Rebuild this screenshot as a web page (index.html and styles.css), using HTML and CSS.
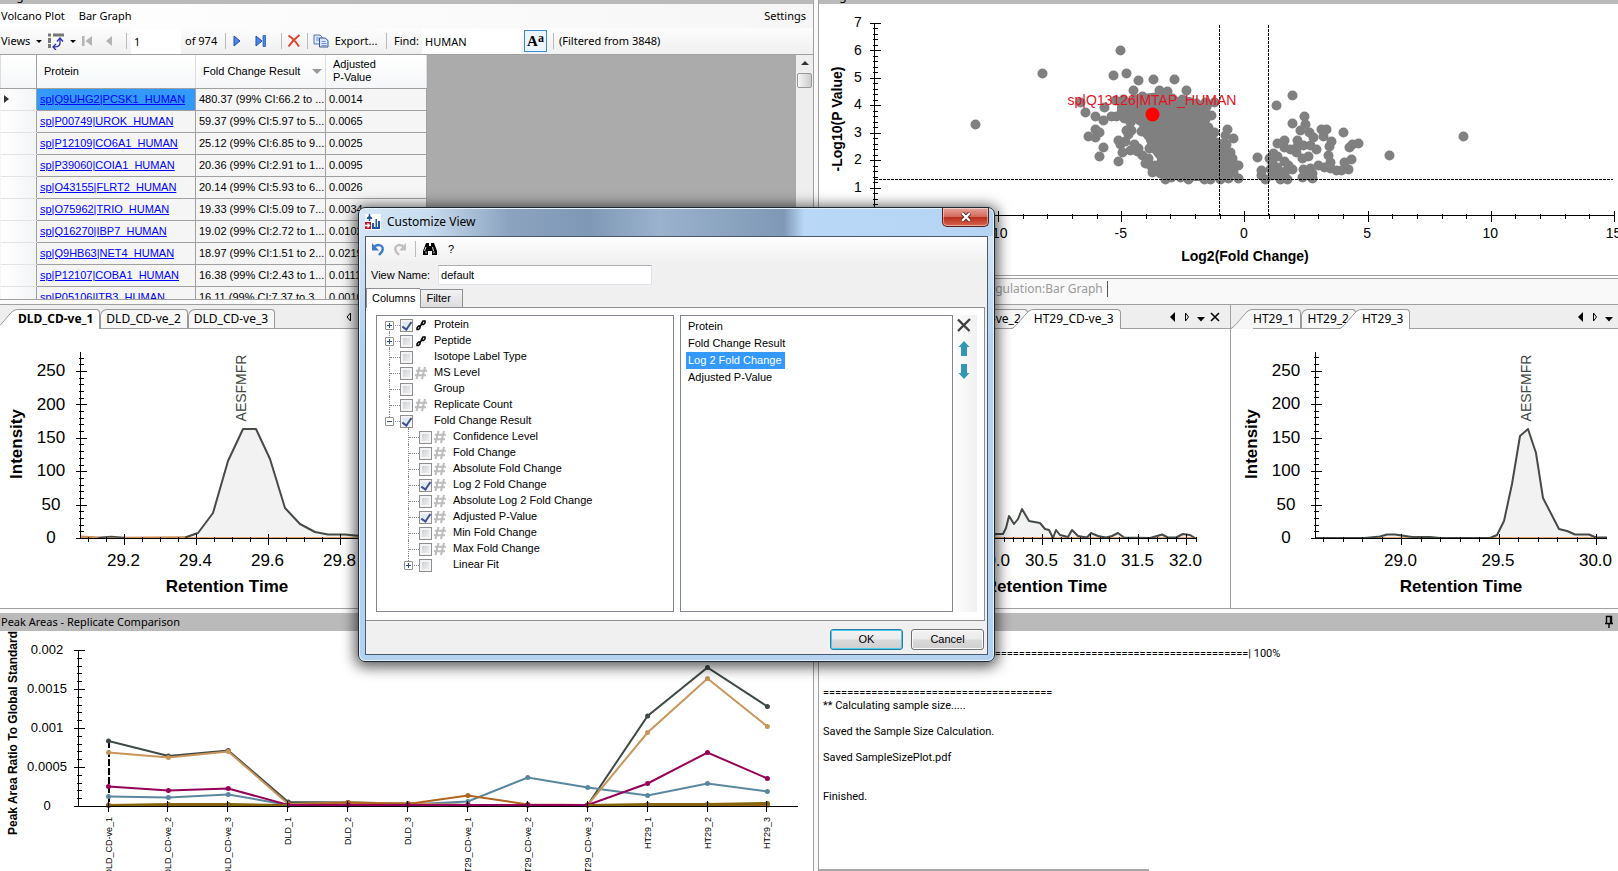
FILE: index.html
```html
<!DOCTYPE html>
<html lang="en">
<head>
<meta charset="utf-8">
<title>Customize View</title>
<link rel="stylesheet" href="styles.css">
</head>
<body>
<svg class="symbols" aria-hidden="true">
  <symbol id="i-hash" viewBox="0 0 14 14"><path d="M5.500 1 2.500 13M11 1 8 13M2 4.700H13M1 9.300H12" fill="none" stroke="#bcbcbc" stroke-width="2"/></symbol>
  <symbol id="i-link" viewBox="0 0 14 14"><path d="M3 10 4.500 8h1.500v2l-1.500 1.500H3zM7.500 5.500l1.500-2.500h2v2L9.500 6.500h-2z" fill="none" stroke="#000" stroke-width="1.500"/><path d="M5.500 8.500l3-3" stroke="#000" stroke-width="1.500"/></symbol>
  <symbol id="i-left" viewBox="0 0 10 12"><path d="M7 1v10L2 6z" fill="#000"/></symbol>
  <symbol id="i-left-o" viewBox="0 0 10 12"><path d="M6.500 2v8L3 6z" fill="none" stroke="#000"/></symbol>
  <symbol id="i-right-o" viewBox="0 0 10 12"><path d="M3.500 2v8L6.500 6z" fill="none" stroke="#000"/></symbol>
  <symbol id="i-down" viewBox="0 0 10 12"><path d="M1 6h8L5 10.500z" fill="#000"/></symbol>
  <symbol id="i-x" viewBox="0 0 10 12"><path d="M1 2l8 8M9 2l-8 8" stroke="#000" stroke-width="1.600"/></symbol>
  <symbol id="i-slant" viewBox="0 0 22 20"><path class="slant-fill" d="M0 20C5 17 12 6 17 2Q19 .5 22 .5V20z"/><path d="M0 19.500C5 17 12 6 17 2Q19 .5 22 .5" fill="none" stroke="#999"/></symbol>
</svg>

<main class="app">
  <section class="top-row">
    <div class="grid-panel">
      <div class="panel-sliver"><span>Regulation:Grid</span></div>
      <nav class="menubar">
        <button type="button">Volcano Plot</button>
        <button type="button">Bar Graph</button>
        <button type="button" class="push">Settings</button>
      </nav>
      <div class="toolbar">
        <button type="button" class="views">Views <i class="caret"></i></button>
        <button type="button" class="layout" aria-label="Pivot">
          <svg width="18" height="18" viewBox="0 0 18 18"><path d="M1 3h3M6 3h11" stroke="#777" stroke-width="3"/><path d="M2.500 6v10" stroke="#777" stroke-width="3" stroke-dasharray="5 1"/><path d="M13 7v4q0 4-6 4" fill="none" stroke="#2a2ab8" stroke-width="1.300"/><path d="M10 9.500 13 6l3 3.500M9 12 6 15l3 3" fill="none" stroke="#2a2ab8" stroke-width="1.300"/></svg>
          <i class="caret"></i>
        </button>
        <button type="button" aria-label="First"><svg width="12" height="12" viewBox="0 0 12 12"><path d="M1 1h2.500v10H1zM11 1v10L4.500 6z" fill="#b4b4b4"/></svg></button>
        <button type="button" aria-label="Previous"><svg width="12" height="12" viewBox="0 0 12 12"><path d="M9 1v10L3 6z" fill="#b4b4b4"/></svg></button>
        <i class="sep"></i>
        <input type="text" value="1" aria-label="Row">
        <span>of 974</span>
        <i class="sep"></i>
        <button type="button" aria-label="Next"><svg width="12" height="12" viewBox="0 0 12 12"><path d="M3 1v10l6-5z" fill="#4d87e6" stroke="#1d4fae"/></svg></button>
        <button type="button" aria-label="Last"><svg width="12" height="12" viewBox="0 0 12 12"><path d="M1 1v10l6-5z" fill="#4d87e6" stroke="#1d4fae"/><path d="M8 .5h2.500v11H8z" fill="#4d87e6" stroke="#1d4fae" stroke-width=".7"/></svg></button>
        <i class="sep"></i>
        <button type="button" aria-label="Delete"><svg width="14" height="14" viewBox="0 0 14 14"><path d="M1.500 1.500Q7 5 12 12.500M12.500 1Q6 6 1.500 12.500" fill="none" stroke="#e2402c" stroke-width="2"/></svg></button>
        <i class="sep"></i>
        <button type="button" aria-label="Copy"><svg width="16" height="14" viewBox="0 0 16 14"><path d="M1 1h6l2 2v7H1z" fill="#dfe9fa" stroke="#5577b5"/><path d="M6.500 4h5.500l3 2.500V13H6.500z" fill="#dfe9fa" stroke="#34579c"/><path d="M3 4h3M3 6h3M8.500 7.500h4M8.500 9.500h5M8.500 11.500h5" stroke="#6f93d4"/></svg></button>
        <button type="button">Export...</button>
        <i class="sep"></i>
        <label for="find">Find:</label>
        <input type="text" id="find" value="HUMAN">
        <button type="button" class="case-btn" aria-label="Match case"><b>A</b><b class="small-a">a</b></button>
        <i class="sep"></i>
        <span class="filtered">(Filtered from 3848)</span>
      </div>
      <div class="datagrid">
        <table>
          <colgroup><col class="c-head"><col class="c-protein"><col class="c-fold"><col class="c-p"></colgroup>
          <thead><tr><th></th><th>Protein</th><th><span class="sorted">Fold Change Result<i></i></span></th><th class="two">Adjusted<br>P-Value</th></tr></thead>
          <tbody>
            <tr class="current"><td><i class="row-mark"></i></td><td><a href="#">sp|Q9UHG2|PCSK1_HUMAN</a></td><td>480.37 (99% CI:66.2 to ...</td><td>0.0014</td></tr>
            <tr><td></td><td><a href="#">sp|P00749|UROK_HUMAN</a></td><td>59.37 (99% CI:5.97 to 5...</td><td>0.0065</td></tr>
            <tr><td></td><td><a href="#">sp|P12109|CO6A1_HUMAN</a></td><td>25.12 (99% CI:6.85 to 9...</td><td>0.0025</td></tr>
            <tr><td></td><td><a href="#">sp|P39060|COIA1_HUMAN</a></td><td>20.36 (99% CI:2.91 to 1...</td><td>0.0095</td></tr>
            <tr><td></td><td><a href="#">sp|O43155|FLRT2_HUMAN</a></td><td>20.14 (99% CI:5.93 to 6...</td><td>0.0026</td></tr>
            <tr><td></td><td><a href="#">sp|O75962|TRIO_HUMAN</a></td><td>19.33 (99% CI:5.09 to 7...</td><td>0.0034</td></tr>
            <tr><td></td><td><a href="#">sp|Q16270|IBP7_HUMAN</a></td><td>19.02 (99% CI:2.72 to 1...</td><td>0.0102</td></tr>
            <tr><td></td><td><a href="#">sp|Q9HB63|NET4_HUMAN</a></td><td>18.97 (99% CI:1.51 to 2...</td><td>0.0219</td></tr>
            <tr><td></td><td><a href="#">sp|P12107|COBA1_HUMAN</a></td><td>16.38 (99% CI:2.43 to 1...</td><td>0.0111</td></tr>
            <tr><td></td><td><a href="#">sp|P05106|ITB3_HUMAN</a></td><td>16.11 (99% CI:7.37 to 3...</td><td>0.0010</td></tr>
          </tbody>
        </table>
        <div class="scrollbar"><i class="up"></i><i class="thumb"></i></div>
      </div>
    </div>
    <div class="volcano-panel">
      <div class="panel-sliver"><span>Regulation:Volcano Plot</span></div>
      <svg id="volcano" class="chart" viewBox="819 4 799 271"></svg>
      <div class="doc-tabs"><button type="button" class="hidden-doc" aria-label="Volcano Plot"></button><button type="button">Regulation:Bar Graph</button></div>
    </div>
  </section>

  <section class="chrom-row">
    <div class="pane">
      <div class="tabstrip">
        <button type="button" class="tab slanted active bold first"><svg class="slant"><use href="#i-slant"/></svg><span>DLD_CD-ve_1</span></button>
        <button type="button" class="tab"><span>DLD_CD-ve_2</span></button>
        <button type="button" class="tab"><span>DLD_CD-ve_3</span></button>
        <div class="tab-tools"><svg><use href="#i-left-o"/></svg><svg><use href="#i-right-o"/></svg><svg><use href="#i-down"/></svg><svg><use href="#i-x"/></svg></div>
      </div>
      <svg id="chrom1" class="chart" viewBox="0 329 406 279"></svg>
    </div>
    <div class="pane"><div class="tabstrip"></div></div>
    <div class="pane">
      <div class="tabstrip indent">
        <button type="button" class="tab slanted"><svg class="slant"><use href="#i-slant"/></svg><span>HT29_CD-ve_1</span></button>
        <button type="button" class="tab"><span>HT29_CD-ve_2</span></button>
        <button type="button" class="tab slanted active over"><svg class="slant"><use href="#i-slant"/></svg><span>HT29_CD-ve_3</span></button>
        <div class="tab-tools"><svg><use href="#i-left"/></svg><svg><use href="#i-right-o"/></svg><svg><use href="#i-down"/></svg><svg><use href="#i-x"/></svg></div>
      </div>
      <svg id="chrom3" class="chart" viewBox="818 329 412 279"></svg>
    </div>
    <div class="pane last">
      <div class="tabstrip">
        <button type="button" class="tab slanted"><svg class="slant"><use href="#i-slant"/></svg><span>HT29_1</span></button>
        <button type="button" class="tab"><span>HT29_2</span></button>
        <button type="button" class="tab slanted active over"><svg class="slant"><use href="#i-slant"/></svg><span>HT29_3</span></button>
        <div class="tab-tools edge"><svg><use href="#i-left"/></svg><svg><use href="#i-right-o"/></svg><svg><use href="#i-down"/></svg></div>
      </div>
      <svg id="chrom4" class="chart" viewBox="1231 329 387 279"></svg>
    </div>
  </section>

  <section class="bottom-row">
    <div class="areas-panel">
      <h2 class="panel-title">Peak Areas - Replicate Comparison</h2>
      <svg id="areas" class="chart" viewBox="0 631 813 240"></svg>
    </div>
    <div class="log-panel">
      <h2 class="panel-title"><svg class="pin" viewBox="0 0 10 14"><path d="M2.500 8V1.500h5V8M1 8.500h8M5 9v4M6.500 2v6" fill="none" stroke="#000" stroke-width="1.400"/></svg></h2>
      <pre class="log">|======================================================================| 100%


======================================
** Calculating sample size.....

Saved the Sample Size Calculation.

Saved SampleSizePlot.pdf


Finished.</pre>
      <div class="hscroll"></div>
    </div>
  </section>
</main>

<div class="dialog" role="dialog" aria-labelledby="dlg-title">
  <header class="titlebar">
    <svg class="app-icon" width="16" height="16" viewBox="0 0 16 16"><path fill="#fff" d="M0 0h16v16H0z"/><path d="M4.500 0v7M2 4h5" stroke="#2457a0" stroke-width="1.500"/><path d="M4.500 1 7.500 5h-6z" fill="#2457a0"/><path d="M0 8h6v7H0z" fill="#c2182c"/><path d="M0 11.500h4M2.500 9.500l2 2-2 2" fill="none" stroke="#fff" stroke-width="1.300"/><path d="M7 15V9h2v4h1.500V5H12v8h1V7h2v8z" fill="#1c56a8"/></svg>
    <h1 id="dlg-title">Customize View</h1>
    <button type="button" class="close" aria-label="Close"><svg width="14" height="10" viewBox="0 0 16 12"><path d="M3.500 1.500l9 9M12.500 1.500l-9 9" stroke="#5b2a2a" stroke-width="5"/><path d="M3.500 1.500l9 9M12.500 1.500l-9 9" stroke="#fff" stroke-width="2.800"/></svg></button>
  </header>
  <form class="client" onsubmit="return false">
    <div class="dlg-tools">
      <button type="button" aria-label="Undo"><svg width="14" height="14" viewBox="0 0 14 14"><path d="M2.500 5.500Q6 2 9.500 3.500T11 9.500L8 13" fill="none" stroke="#3f78cf" stroke-width="2.400"/><path d="M1 1v7.500h7z" fill="#3f78cf"/></svg></button>
      <button type="button" aria-label="Redo"><svg width="14" height="14" viewBox="0 0 14 14"><path d="M11.500 5.500Q8 2 4.500 3.500T3 9.500L6 13" fill="none" stroke="#c0c0c0" stroke-width="2.400"/><path d="M13 1v7.500H6z" fill="#c0c0c0"/></svg></button>
      <i class="sep"></i>
      <button type="button" aria-label="Find"><svg width="16" height="14" viewBox="0 0 16 14"><path d="M4 1h3v3h2V1h3l3 8v4h-5V9H6v4H1V9z" fill="#000"/><path d="M4 5l-1.500 4M10.500 5l1 4M4 9.500v2M12 9.500v2" stroke="#fff" stroke-width=".9"/></svg></button>
      <button type="button" aria-label="Help">?</button>
    </div>
    <div class="name-row"><label for="view-name">View Name:</label><input type="text" id="view-name" value="default"></div>
    <div class="dlg-tabs"><button type="button" class="on">Columns</button><button type="button">Filter</button></div>
    <div class="tab-page">
      <ul class="tree">
        <li class="node first"><span class="twist"><button type="button" class="box plus" aria-label="Expand"></button></span><input type="checkbox" id="t1" checked><svg class="kind"><use href="#i-link"/></svg><label for="t1">Protein</label></li>
        <li class="node"><span class="twist"><button type="button" class="box plus" aria-label="Expand"></button></span><input type="checkbox" id="t2"><svg class="kind"><use href="#i-link"/></svg><label for="t2">Peptide</label></li>
        <li class="node"><span class="twist"></span><input type="checkbox" id="t3"><i class="kind"></i><label for="t3">Isotope Label Type</label></li>
        <li class="node"><span class="twist"></span><input type="checkbox" id="t4"><svg class="kind"><use href="#i-hash"/></svg><label for="t4">MS Level</label></li>
        <li class="node"><span class="twist"></span><input type="checkbox" id="t5"><i class="kind"></i><label for="t5">Group</label></li>
        <li class="node"><span class="twist"></span><input type="checkbox" id="t6"><svg class="kind"><use href="#i-hash"/></svg><label for="t6">Replicate Count</label></li>
        <li class="node end"><span class="twist"><button type="button" class="box" aria-label="Collapse"></button></span><input type="checkbox" id="t7" checked><i class="kind"></i><label for="t7">Fold Change Result</label></li>
        <li class="node child"><span class="twist"></span><input type="checkbox" id="t8"><svg class="kind"><use href="#i-hash"/></svg><label for="t8">Confidence Level</label></li>
        <li class="node child"><span class="twist"></span><input type="checkbox" id="t9"><svg class="kind"><use href="#i-hash"/></svg><label for="t9">Fold Change</label></li>
        <li class="node child"><span class="twist"></span><input type="checkbox" id="t10"><svg class="kind"><use href="#i-hash"/></svg><label for="t10">Absolute Fold Change</label></li>
        <li class="node child"><span class="twist"></span><input type="checkbox" id="t11" checked><svg class="kind"><use href="#i-hash"/></svg><label for="t11">Log 2 Fold Change</label></li>
        <li class="node child"><span class="twist"></span><input type="checkbox" id="t12"><svg class="kind"><use href="#i-hash"/></svg><label for="t12">Absolute Log 2 Fold Change</label></li>
        <li class="node child"><span class="twist"></span><input type="checkbox" id="t13" checked><svg class="kind"><use href="#i-hash"/></svg><label for="t13">Adjusted P-Value</label></li>
        <li class="node child"><span class="twist"></span><input type="checkbox" id="t14"><svg class="kind"><use href="#i-hash"/></svg><label for="t14">Min Fold Change</label></li>
        <li class="node child"><span class="twist"></span><input type="checkbox" id="t15"><svg class="kind"><use href="#i-hash"/></svg><label for="t15">Max Fold Change</label></li>
        <li class="node child end"><span class="twist"><button type="button" class="box plus" aria-label="Expand"></button></span><input type="checkbox" id="t16"><i class="kind"></i><label for="t16">Linear Fit</label></li>
      </ul>
      <ul class="chosen">
        <li><span>Protein</span></li>
        <li><span>Fold Change Result</span></li>
        <li><span class="selected">Log 2 Fold Change</span></li>
        <li><span>Adjusted P-Value</span></li>
      </ul>
      <div class="side-tools">
        <button type="button" aria-label="Remove"><svg width="16" height="16" viewBox="0 0 16 16"><path d="M2 2.500 13.500 14M14 2 2 14" stroke="#404040" stroke-width="2.400"/></svg></button>
        <button type="button" aria-label="Move up"><svg width="12" height="15" viewBox="0 0 12 15"><path d="M6 0l5.500 6H9v9H3V6H.5z" fill="#3396b5"/></svg></button>
        <button type="button" aria-label="Move down"><svg width="12" height="15" viewBox="0 0 12 15"><path d="M6 15l5.500-6H9V0H3v9H.5z" fill="#3396b5"/></svg></button>
      </div>
    </div>
    <div class="actions"><button type="submit" class="ok">OK</button><button type="button">Cancel</button></div>
  </form>
</div>
<script src="charts.js"></script>
</body>
</html>
```
FILE: styles.css
```css
* { box-sizing: border-box; }
body { margin: 0; background: #fafafa; font: 12px/16px "Noto Sans", "Open Sans", sans-serif; color: #000; overflow: hidden; }
button { font: inherit; color: inherit; background: none; border: 0; padding: 0; display: flex; align-items: center; }
input[type="text"] { font: inherit; border: 0; background: #fff; padding: 0 3px; min-width: 0; }
h1, h2, ul, pre { margin: 0; padding: 0; font-size: inherit; font-weight: normal; }
ul { list-style: none; }
.symbols { display: none; }
.chart { display: block; width: 100%; height: auto; background: #fff; font-family: "Liberation Sans", Arial, sans-serif; }

.app { display: flex; flex-direction: column; height: 100vh; overflow: hidden; }
.top-row { display: grid; grid-template-columns: 814fr 804fr; }
.panel-sliver { height: 4px; background: #bababa; overflow: hidden; display: flex; align-items: flex-end; padding-left: 2px; }
.volcano-panel .panel-sliver { padding-left: 6px; }

.grid-panel { display: flex; flex-direction: column; border-right: 1px solid #a0a0a0; }
.menubar { display: flex; gap: 14px; height: 24px; padding: 0 7px 0 1px; background: linear-gradient(90deg, #fff, #f6f6f6); font-size: 11px; }
.push { margin-left: auto; }
.toolbar { display: grid; height: 26px; align-items: center; background: linear-gradient(#fdfdfd, #f0f0f0); font-size: 11px; white-space: nowrap;
  grid-template-columns: 46px 31px 20px 24px 10px 50px 40px 8px 16px 32px 8px 18px 8px 19px 52px 8px 32px 99px 29px 7px 1fr; }
.toolbar > button { justify-content: center; height: 24px; }
.toolbar > input { height: 25px; }
.toolbar > span, .toolbar > label { padding-left: 4px; }
.toolbar > .filtered { padding-left: 2px; }
.toolbar .views { justify-content: flex-start; padding-left: 1px; gap: 6px; }
.layout { gap: 5px; }
.caret { border: 3px solid transparent; border-top-color: #000; border-bottom: 0; width: 0; }
.sep { width: 1px; height: 16px; background: #bbb; justify-self: center; }
.toolbar .case-btn { width: 23px; height: 22px; justify-self: center; border: 1px solid #3a8ad0; background: #eef6fd; font: 15px/15px "Liberation Serif", serif; }
.small-a { align-self: flex-start; font-size: 12px; }

.datagrid { flex: 1 1 0; min-height: 0; overflow: hidden; display: flex; align-items: flex-start; background: #ababab; border-top: 1px solid #a0a0a0; border-bottom: 1px solid #a0a0a0; font: 11px/13px "Liberation Sans", Arial, sans-serif; margin-bottom: 4px; }
table { border-collapse: collapse; table-layout: fixed; width: 426px; background: #f5f5f5; }
.c-head { width: 36px; } .c-protein { width: 159px; } .c-fold { width: 130px; } .c-p { width: 101px; }
th { height: 33px; padding: 0 7px; font-weight: normal; text-align: left; background: linear-gradient(#fff, #f5f6f8); border: 1px solid #dcdde0; border-bottom-color: #a0a0a0; border-top: 0; white-space: nowrap; }
th:first-child { border-right-color: #a0a0a0; }
.sorted { display: flex; justify-content: space-between; align-items: center; }
.sorted i { border: 5px solid transparent; border-top-color: #999; border-bottom: 0; margin-right: -4px; }
td { height: 22px; padding: 0 3px; border: 1px solid #a0a0a0; white-space: nowrap; overflow: hidden; }
td:first-child { background: linear-gradient(90deg, #fff, #f3f4f7); border-top-color: #e2e3e6; border-bottom-color: #e2e3e6; border-left: 0; }
td a { color: #00f; }
.current td:nth-child(2) { background: #3399ff; }
.row-mark { display: block; width: 0; border: 4px solid transparent; border-left: 5px solid #333; border-right: 0; }
.scrollbar { margin-left: auto; align-self: stretch; width: 17px; background: #eee; display: flex; flex-direction: column; align-items: center; padding-top: 6px; gap: 8px; }
.scrollbar .up { border: 4px solid transparent; border-bottom-color: #333; border-top: 0; }
.scrollbar .thumb { width: 15px; height: 15px; border: 1px solid #999; border-radius: 2px; background: linear-gradient(90deg, #f6f6f6, #ccc); }

.volcano-panel { margin-left: 4px; border-left: 1px solid #a0a0a0; }
.doc-tabs { display: flex; height: 29px; border-top: 1px solid #a0a0a0; background: #f9f9f9; color: #999; padding: 3px 0; box-shadow: inset 0 2px #fff, inset 0 3px #a0a0a0; }
.doc-tabs button { border-right: 1px solid #555; padding-right: 4px; height: 16px; margin-top: 2px; }
.doc-tabs .hidden-doc { width: 162px; border: 0; }

.chrom-row { display: grid; grid-template-columns: 406fr 412fr 412fr 388fr; border-top: 1px solid #a0a0a0; border-bottom: 1px solid #a0a0a0; background: #fff; }
.pane { min-width: 0; overflow: hidden; }
.pane.last { border-left: 1px solid #a0a0a0; }
.tabstrip { display: flex; align-items: flex-end; height: 24px; background: #eee; box-shadow: inset 0 -1px #a0a0a0; }
.tabstrip.indent { padding-left: 8px; }
.tab { height: 20px; flex: none; align-items: stretch; }
.tab span { border: 1px solid #999; border-bottom: 0; border-radius: 7px 4px 0 0; padding: 1px 6px 0 5px; background: #f7f7f7; }
.tab:not(.active) span { height: 19px; align-self: flex-start; }
.tab.slanted span { border-left: 0; border-radius: 0 4px 0 0; padding-left: 0; }
.tab.active span { background: #fff; }
.tab.bold { font-weight: bold; }
.tab.first { margin-left: -4px; }
.tab.over { margin-left: -16px; position: relative; }
.slant { width: 22px; height: 20px; flex: none; fill: #f7f7f7; }
.active .slant { fill: #fff; }
.tab-tools { margin-left: auto; display: flex; gap: 4px; padding: 0 10px 6px 0; }
.tab-tools.edge { padding-right: 4px; }
.tab-tools svg { width: 10px; height: 12px; }

.bottom-row { flex: 1; min-height: 0; display: grid; grid-template-columns: 814fr 804fr; margin-top: 4px; overflow: hidden; }
.panel-title { height: 18px; line-height: 17px; font-size: 11px; background: #bababa; padding-left: 1px; overflow: hidden; }
.areas-panel { border-right: 1px solid #a0a0a0; overflow: hidden; }
.log-panel { margin-left: 4px; border-left: 1px solid #a0a0a0; background: #fff; display: flex; flex-direction: column; }
.pin { display: block; width: 10px; height: 14px; margin: 2px 4px 0 auto; }
.log { flex: 1; padding: 16px 4px; font: 11px/13px Roboto, "Liberation Sans", sans-serif; overflow: hidden; }
.hscroll { height: 2px; width: 330px; background: #a8a8a8; }

.dialog { position: absolute; left: 358px; top: 207px; width: 637px; padding: 0 6px 6px; border: 1px solid #1c2733; border-radius: 7px; background: linear-gradient(90deg, #d5e7f7 0, #c8dcf0 70px, #8ba3bf 150px, #7f98b6 230px, #9ab2cc 300px, #7f98b6 425px, #b9d7f6 445px, #b5d3f3); box-shadow: inset 0 0 0 1px #e6f3ff, 0 2px 14px 3px rgba(0, 0, 0, .65); font: 11px/13px "Liberation Sans", Arial, sans-serif; }
.dialog::before { content: ""; position: absolute; inset: 28px 1px 1px; border-radius: 0 0 6px 6px; background: linear-gradient(#d5e5f3, #b3d2f2 110px, #b3d2f2); }
.titlebar { position: relative; height: 28px; display: flex; align-items: center; gap: 6px; font: 12px/16px "Noto Sans", sans-serif; }
.close { margin: 0 -1px 0 auto; align-self: flex-start; width: 47px; height: 19px; justify-content: center; border: 1px solid #5a1b1b; border-top: 0; border-radius: 0 0 5px 5px; background: linear-gradient(#e6a59c, #d36a5c 48%, #b92f1d 52%, #d5644f); box-shadow: inset 0 0 0 1px rgba(255, 255, 255, .45); }
.client { position: relative; border: 1px solid #4c5a6b; background: #f0f0f0; }
.dlg-tools { display: flex; align-items: center; gap: 8px; height: 24px; padding-left: 5px; background: linear-gradient(#fdfdfd, #f2f2f2); }
.dlg-tools button:nth-of-type(3) { margin-left: -2px; }
.dlg-tools button:last-child { padding-left: 2px; }
.name-row { display: flex; align-items: center; gap: 8px; padding: 4px 5px 3px; }
.name-row input { width: 214px; height: 20px; border: 1px solid #e2e3ea; border-top-color: #abadb3; padding: 0 2px; }
.dlg-tabs { display: flex; align-items: flex-end; }
.dlg-tabs button { height: 18px; padding: 0 11px 0 5px; border: 1px solid #8c8e94; border-bottom: 0; background: linear-gradient(#f2f2f2, #ddd); }
.dlg-tabs .on { height: 20px; padding: 0 5px 0 5px; margin-bottom: -1px; position: relative; border-right: 0; background: #fff; }
.tab-page { display: grid; grid-template-columns: 302fr 273fr 22px; column-gap: 2px; padding: 7px 7px 8px 10px; margin-right: 2px; background: #fff; border: 1px solid #8c8e94; border-width: 1px 1px 1px 0; }
.tree, .chosen { height: 297px; border: 1px solid #82878f; background: #fff; }
.tree { padding-left: 8px; margin-right: 4px; }
.node { display: flex; align-items: center; height: 16px; position: relative; }
.twist { position: relative; flex: none; width: 15px; height: 16px; display: flex; align-items: center; }
.twist::before { content: ""; position: absolute; left: 4px; top: 0; bottom: 0; border-left: 1px dotted #888; }
.twist::after { content: ""; position: absolute; left: 5px; right: 0; top: 9px; border-top: 1px dotted #888; }
.first .twist::before { top: 8px; }
.end .twist::before { bottom: 7px; }
.child { padding-left: 19px; }
.box { position: relative; z-index: 1; width: 9px; height: 9px; margin-top: 2px; border: 1px solid #919191; border-radius: 1px; background: linear-gradient(90deg, #334c9c, #334c9c) center / 5px 1px no-repeat, #fff; }
.box.plus { background: linear-gradient(#334c9c, #334c9c) center / 5px 1px no-repeat, linear-gradient(#334c9c, #334c9c) center / 1px 5px no-repeat, #fff; }
.node input { appearance: none; flex: none; width: 13px; height: 13px; margin: 2px 0 0; border: 1px solid #8e8f8f; background: linear-gradient(135deg, #c4c8ce, #f8f8f8); box-shadow: inset 0 0 0 2px #f4f4f4; position: relative; }
.node input:checked { background: linear-gradient(135deg, #cfe0f2, #f8f8f8); }
.node input:checked::after { content: ""; position: absolute; left: 3px; top: 0; width: 4px; height: 8px; border: solid #3d4f8f; border-width: 0 2px 2px 0; transform: rotate(35deg); }
.kind { width: 14px; height: 14px; flex: none; margin: 2px 6px 0 1px; }
.chosen { padding: 2px 5px; }
.chosen li { height: 17px; line-height: 17px; }
.chosen span { display: inline-block; padding: 0 3px 0 2px; }
.selected { background: #3399ff; color: #fff; }
.side-tools { display: flex; flex-direction: column; align-items: center; gap: 8px; padding: 2px 5px 0 0; background: linear-gradient(90deg, #fdfdfd, #f0f0f0); }
.actions { display: flex; justify-content: flex-end; gap: 8px; padding: 8px 3px 4px; }
.actions button { width: 73px; height: 21px; justify-content: center; border: 1px solid #707070; border-radius: 3px; background: linear-gradient(#f3f3f3, #ebebeb 48%, #dadada 52%, #cfcfcf); box-shadow: inset 0 0 0 1px #fbfbfb; }
.actions .ok { border-color: #2c7a9e; box-shadow: inset 0 0 0 1px #48cdf0; }
```
FILE: charts.js
```js
const NS = "http://www.w3.org/2000/svg";
const $ = id => document.getElementById(id);

function add(svg, name, attrs, text) {
  const el = document.createElementNS(NS, name);
  for (const key in attrs) el.setAttribute(key, attrs[key]);
  if (text !== undefined) el.textContent = text;
  svg.appendChild(el);
  return el;
}
function line(svg, x1, y1, x2, y2, extra) {
  add(svg, "line", Object.assign({ x1, y1, x2, y2, stroke: "#000", "stroke-width": 1, "shape-rendering": "crispEdges" }, extra));
}
function label(svg, x, y, text, size, extra) {
  add(svg, "text", Object.assign({ x, y, "font-size": size, "text-anchor": "middle" }, extra), text);
}
function sideLabel(svg, x, y, text, size, extra) {
  label(svg, x, y, text, size, Object.assign({ transform: `rotate(-90 ${x} ${y})` }, extra));
}
// Vertical axis: zero at y0, one major step of `step` pixels, split in `parts`.
function yAxis(svg, x, y0, top, step, parts, labels, lx, size) {
  line(svg, x, top, x, y0);
  for (let i = 0; y0 - i * step / parts >= top - 0.5; i++) {
    const y = Math.round(y0 - i * step / parts) + 0.5, major = i % parts === 0;
    line(svg, x - (major ? 5 : 2), y, x + (major ? 6 : 3), y);
  }
  labels.forEach((t, i) => label(svg, lx, Math.round(y0 - i * step + size * 0.3), t, size));
}
// Horizontal axis: `first` is the position of the first labelled tick.
function xAxis(svg, y, x1, x2, first, step, parts, labels, ly, size) {
  line(svg, x1, y, x2, y);
  const sub = step / parts;
  for (let i = -Math.floor((first - x1) / sub); first + i * sub <= x2 + 0.5; i++) {
    const x = Math.floor(first + i * sub) + 0.5, major = i % parts === 0;
    line(svg, x, y - (major ? 5 : 2), x, y + (major ? 6 : 3));
  }
  labels.forEach((t, i) => label(svg, first + i * step - 1, ly, t, size));
}

/* Volcano plot */
const v = $("volcano");
const cloud = "1120,101 1130,101 1143,97 1160,95 1170,97 1176,100 1190,100 1200,106 1209,106 1205,114 1200,121 1205,128 1212,134 1216,144 1223,142 1228,150 1230,158 1232,168 1228,176 1210,178 1185,178 1168,174 1160,168 1160,158 1152,148 1148,138 1143,132 1142,124 1132,118 1120,114";
add(v, "polygon", { points: cloud, fill: "#808080", stroke: "#808080", "stroke-width": 6, "stroke-linejoin": "round" });
const points = [[1120,50],[1042,73],[1113,75],[1126,73],[1138,80],[1153,79],[1174,79],[1133,90],[1186,90],[975,124],[1085,112],[1080,102],[1095,116],[1103,120],[1104,107],[1111,116],[1095,129],[1099,132],[1088,136],[1095,137],[1103,147],[1099,156],[1118,161],[1118,140],[1120,144],[1122,152],[1125,141],[1128,134],[1126,130],[1130,150],[1134,144],[1137,151],[1141,131],[1138,148],[1142,155],[1145,163],[1149,148],[1148,158],[1150,165],[1152,172],[1165,179],
[1115,100],[1123,99],[1134,99],[1142,96],[1159,90],[1167,91],[1172,98],[1182,99],[1196,103],[1205,102],[1214,102],[1116,116],[1124,118],[1130,122],[1131,130],[1205,119],[1211,115],[1208,127],[1214,132],[1216,142],[1227,129],[1225,135],[1233,138],[1226,144],[1230,152],[1232,158],[1233,163],[1238,165],[1233,172],[1238,178],[1228,178],[1220,179],[1210,179],[1204,179],[1188,179],[1180,177],[1171,177],[1160,173],[1155,165],
[1292,95],[1276,105],[1304,116],[1292,123],[1305,124],[1300,130],[1309,132],[1313,137],[1321,129],[1326,129],[1323,136],[1343,132],[1331,141],[1329,146],[1297,140],[1284,140],[1277,143],[1284,147],[1290,149],[1297,146],[1303,145],[1310,145],[1316,149],[1296,152],[1302,158],[1308,156],[1328,155],[1349,147],[1352,144],[1358,143],[1257,157],[1269,158],[1273,153],[1277,156],[1272,163],[1463,136],[1389,155],[1351,159],[1344,162],[1348,169],[1336,170],[1341,170],[1330,162],[1330,168],[1318,165],[1324,167],[1303,169],[1310,168],[1312,173],[1302,177],[1312,178],[1307,174],[1261,170],[1261,175],[1265,179],[1270,169],[1277,167],[1284,161],[1288,165],[1292,169],[1285,171],[1278,172],[1280,179],[1287,179],[1272,175]];
points.forEach(([cx, cy]) => add(v, "circle", { cx: cx + 0.5, cy: cy + 0.5, r: 5, fill: "#808080" }));
yAxis(v, 874.5, 215, 23, 27.45, 5, [0, 1, 2, 3, 4, 5, 6, 7], 858, 14);
xAxis(v, 215.5, 875, 1615, 998.5, 123.2, 5, [-10, -5, 0, 5, 10, 15], 238, 14);
line(v, 875, 179.5, 1613, 179.5, { "stroke-dasharray": "3 1" });
line(v, 1219.5, 25, 1219.5, 215, { "stroke-dasharray": "3 1" });
line(v, 1268.5, 25, 1268.5, 215, { "stroke-dasharray": "3 1" });
label(v, 1152, 105, "sp|Q13126|MTAP_HUMAN", 14, { fill: "#e81123" });
add(v, "circle", { cx: 1152.5, cy: 114.5, r: 7, fill: "#f00" });
sideLabel(v, 842, 119, "-Log10(P Value)", 14, { "font-weight": "bold" });
label(v, 1245, 261, "Log2(Fold Change)", 14, { "font-weight": "bold" });

/* Chromatograms */
const INTENSITY = [0, 50, 100, 150, 200, 250];
function peak(svg, pts, x1, x2) {
  add(svg, "polygon", { points: `${x1},538 ${pts} ${x2},538`, fill: "#f2f2f2" });
  line(svg, x1, 537.5, x2, 537.5, { stroke: "#dfa268", "stroke-width": 1 });
  add(svg, "polyline", { points: pts, fill: "none", stroke: "#454b45", "stroke-width": 2, "stroke-linejoin": "round" });
}
const c1 = $("chrom1");
peak(c1, "185,537.500 198,533 213,513 228,461 243,429 256,429 270,459 285,508 300,524 315,532 328,534.500 345,534.500 360,536 400,537", 81, 400);
add(c1, "polyline", { points: "81,536.500 98,537.500", fill: "none", stroke: "#c98a4c", "stroke-width": 2 });
add(c1, "polyline", { points: "98,537.500 111,536.500 124,537.500", fill: "none", stroke: "#454b45", "stroke-width": 1.5 });
add(c1, "polyline", { points: "124,537.500 185,537", fill: "none", stroke: "#c98a4c", "stroke-width": 1.5 });
yAxis(c1, 80.5, 538, 352, 33.4, 5, INTENSITY, 51, 17);
xAxis(c1, 538.5, 81, 400, 124.5, 72, 4, ["29.2", "29.4", "29.6", "29.8"], 566, 17);
sideLabel(c1, 22, 444, "Intensity", 17, { "font-weight": "bold" });
label(c1, 227, 592, "Retention Time", 17, { "font-weight": "bold" });
sideLabel(c1, 246, 388, "AESFMFR", 14, { fill: "#404640" });

const c3 = $("chrom3");
peak(c3, "990,536 996,534 1003,534 1006,528 1009,516 1014,524 1018,519 1022,509 1029,521 1040,523 1045,529 1049,530 1053,538 1056,530 1060,535 1068,537 1072,530 1078,536 1087,537.500 1091,533 1098,536 1106,537.500 1112,536 1118,533 1124,537.500 1150,538 1157,536 1162,534.500 1168,537.500 1176,537.500 1183,534 1190,535 1195,538", 990, 1196);
xAxis(c3, 538.5, 900, 1197, 994.5, 48, 5, ["30.0", "30.5", "31.0", "31.5", "32.0"], 566, 17);
label(c3, 1046, 592, "Retention Time", 17, { "font-weight": "bold" });

const c4 = $("chrom4");
peak(c4, "1316,538 1365,538 1380,536.500 1387,534.500 1395,534.500 1412,537 1430,537 1440,538 1490,538 1497,535 1504,521 1512,484 1520,436 1528,429 1536,453 1543,498 1559,529 1567,531 1575,534.500 1589,534.500 1596,537.500 1607,537.500", 1316, 1607);
yAxis(c4, 1315.5, 538, 352, 33.5, 5, INTENSITY, 1286, 17);
xAxis(c4, 538.5, 1316, 1607, 1401.5, 97.5, 5, ["29.0", "29.5", "30.0"], 566, 17);
sideLabel(c4, 1257, 444, "Intensity", 17, { "font-weight": "bold" });
label(c4, 1461, 592, "Retention Time", 17, { "font-weight": "bold" });
sideLabel(c4, 1531, 388, "AESFMFR", 14, { fill: "#404640" });

/* Peak areas */
const a = $("areas");
const names = ["DLD_CD-ve_1", "DLD_CD-ve_2", "DLD_CD-ve_3", "DLD_1", "DLD_2", "DLD_3", "HT29_CD-ve_1", "HT29_CD-ve_2", "HT29_CD-ve_3", "HT29_1", "HT29_2", "HT29_3"];
const px = i => 108.5 + i * 59.9;
line(a, 109, 741, 109, 806, { "stroke-width": 2, "stroke-dasharray": "7 2" });
const series = [
  ["#3f4a44", [741, 756, 750.5, 802, 802.5, 803.5, 805, 805, 805, 716, 667.5, 706.5]],
  ["#5a87a0", [796.5, 797.5, 794.5, 805, 805, 804.5, 801.5, 777.5, 787.5, 795.5, 783.5, 791.5]],
  ["#c8955a", [752.5, 757.5, 751.5, 804, 802.5, 803.5, 805, 805, 805, 732.5, 678.5, 726.5]],
  ["#b0641e", [805, 805, 805, 805, 802.5, 804, 795.5, 804.5, 805, 805, 805, 805]],
  ["#960058", [786.5, 790.5, 788.5, 805, 805, 805, 805, 805, 805, 783.5, 752.5, 778.5]]
];
series.forEach(([color, ys]) => {
  add(a, "polyline", { points: ys.map((y, i) => px(i) + "," + y).join(" "), fill: "none", stroke: color, "stroke-width": 2 });
  ys.forEach((y, i) => add(a, "circle", { cx: px(i), cy: y, r: 2.5, fill: color }));
});
[[805.5, 804.5, 804.5, 805.5], [805.5, 804.5, 804.5, 803.5]].forEach((ys, k) => {
  const start = k * 8;
  add(a, "polyline", { points: ys.map((y, i) => px(start + i) + "," + y).join(" "), fill: "none", stroke: "#86640c", "stroke-width": 3 });
  ys.forEach((y, i) => i !== (k ? 0 : 3) && add(a, "circle", { cx: px(start + i), cy: y, r: 2.5, fill: "#86640c" }));
});
yAxis(a, 78.5, 806, 650, 39, 5, ["0", "0.0005", "0.001", "0.0015", "0.002"], 47, 13);
line(a, 74, 806.5, 798, 806.5);
names.forEach((n, i) => {
  const x = Math.round(px(i)) - 0.5;
  line(a, x, 801, x, 812);
  sideLabel(a, Math.round(x + 3), 817, n, 9, { "text-anchor": "end" });
});
sideLabel(a, 17, 733, "Peak Area Ratio To Global Standard", 12, { "font-weight": "bold" });
```
